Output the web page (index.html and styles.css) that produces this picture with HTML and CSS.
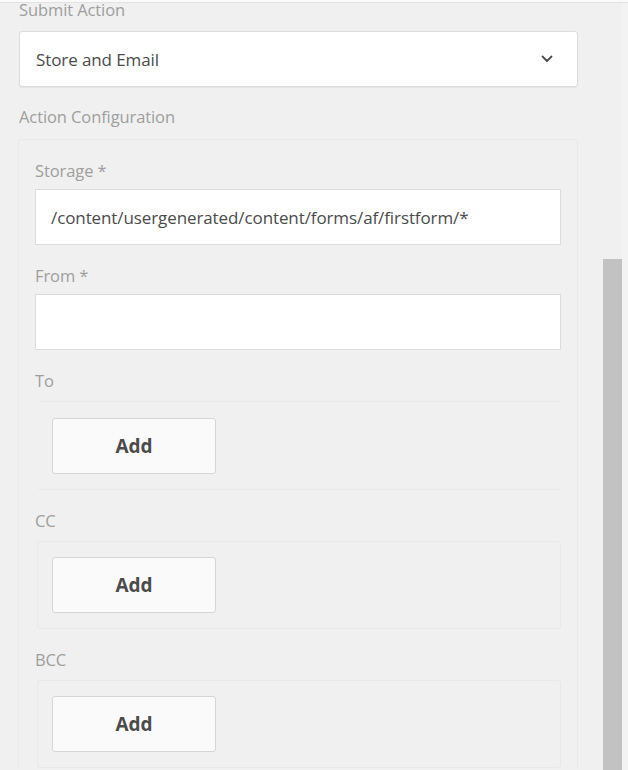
FILE: index.html
```html
<!DOCTYPE html>
<html lang="en">
<head>
<meta charset="utf-8">
<title>Submit Action</title>
<link rel="stylesheet" href="styles.css">
</head>
<body>
<div class="topbar"></div>
<div class="layout">
  <main class="content">
    <div class="label label-top">Submit Action</div>
    <div class="select">
      <span class="select-value">Store and Email</span>
      <svg class="chevron" width="12" height="8" viewBox="0 0 12 8" aria-hidden="true">
        <path d="M1.5 1.5 L6 6 L10.5 1.5" fill="none" stroke="#4b4b4b" stroke-width="1.8" stroke-linecap="round" stroke-linejoin="round"/>
      </svg>
    </div>
    <div class="label label-section">Action Configuration</div>
    <section class="config">
      <div class="field">
        <div class="label">Storage *</div>
        <div class="input">/content/usergenerated/content/forms/af/firstform/*</div>
      </div>
      <div class="field">
        <div class="label">From *</div>
        <div class="input"></div>
      </div>
      <div class="field">
        <div class="label">To</div>
        <div class="multi multi-lines">
          <button class="add-btn" type="button">Add</button>
        </div>
      </div>
      <div class="field">
        <div class="label">CC</div>
        <div class="multi">
          <button class="add-btn" type="button">Add</button>
        </div>
      </div>
      <div class="field">
        <div class="label">BCC</div>
        <div class="multi">
          <button class="add-btn" type="button">Add</button>
        </div>
      </div>
    </section>
  </main>
  <div class="scroll-track">
    <div class="scroll-thumb"></div>
  </div>
</div>
</body>
</html>
```

FILE: styles.css
```css
html, body {
  margin: 0;
  padding: 0;
  height: 100%;
  overflow: hidden;
}

body {
  background: #f0f0f0;
  font-family: "Open Sans", "Liberation Sans", sans-serif;
  color: #4b4b4b;
}

.topbar {
  height: 2px;
  background: #fafafa;
  border-bottom: 1px solid #e2e2e2;
}

.layout {
  display: flex;
  align-items: stretch;
  min-height: 767px;
}

.content {
  width: 560px;
  padding-left: 19px;
}

.label {
  font-size: 16.5px;
  line-height: 20px;
  color: #9e9e9e;
  letter-spacing: -0.1px;
}

.label-top {
  margin-top: -3px;
}

.select {
  margin-top: 11px;
  background: #fff;
  border: 1px solid #dcdcdc;
  border-radius: 3px;
  box-shadow: 0 1px 1px rgba(0,0,0,0.04);
  display: flex;
  align-items: center;
  justify-content: space-between;
  padding: 0 24px 0 16px;
  box-sizing: border-box;
  width: 559px;
  height: 56px;
}

.select-value {
  font-size: 17px;
  color: #4b4b4b;
  letter-spacing: -0.1px;
}

.chevron {
  display: block;
}

.label-section {
  margin-top: 20px;
}

.config {
  margin-top: 12px;
  margin-left: -1px;
  width: 560px;
  box-sizing: border-box;
  border: 1px solid #e9e9e9;
  border-bottom: none;
  border-radius: 3px 3px 0 0;
  padding: 21px 16px 0 16px;
  display: flex;
  flex-direction: column;
  gap: 21px;
}

.field {
  display: flex;
  flex-direction: column;
}

.field .label {
  margin-bottom: 8px;
}

.input {
  height: 56px;
  box-sizing: border-box;
  background: #fff;
  border: 1px solid #dcdcdc;
  padding: 0 15px;
  display: flex;
  align-items: center;
  font-size: 17px;
  color: #4b4b4b;
  letter-spacing: -0.1px;
}

.multi {
  margin-left: 2px;
  margin-top: 2px;
  border: 1px solid #e9e9e9;
  border-radius: 3px;
  padding: 15px 14px 15px 14px;
}

.multi-lines {
  border-left-color: transparent;
  border-right-color: transparent;
  padding-top: 16px;
}

.add-btn {
  display: flex;
  align-items: center;
  justify-content: center;
  width: 164px;
  height: 56px;
  background: #fafafa;
  border: 1px solid #d6d6d6;
  border-radius: 3px;
  font-family: "Open Sans", "Liberation Sans", sans-serif;
  font-size: 19px;
  font-weight: 700;
  color: #4b4b4b;
  padding: 0;
  margin: 0;
}

.scroll-track {
  margin-left: 24px;
  width: 25px;
  padding-top: 256px;
  box-sizing: border-box;
  display: flex;
  flex-direction: column;
  background: linear-gradient(to right, #f0f0f0 0, #f0f0f0 19px, #f3f3f3 19px);
}

.scroll-thumb {
  width: 19px;
  flex: 1;
  background: #c2c2c2;
}
```
